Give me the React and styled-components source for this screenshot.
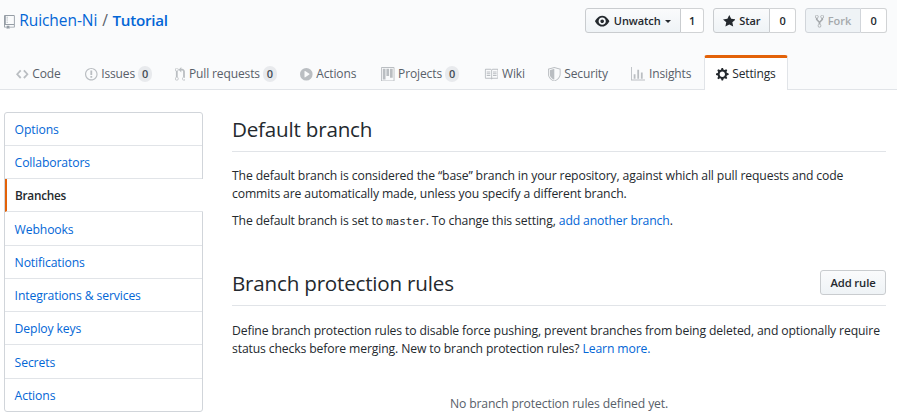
import React from 'react';
import styled, { createGlobalStyle, css } from 'styled-components';

const GlobalStyle = createGlobalStyle`
  * { box-sizing: border-box; }
  body {
    margin: 0;
    background: #fff;
    color: #24292e;
    font: 12.2px/18px "Open Sans", "Noto Sans", sans-serif;
    letter-spacing: -0.13px;
    overflow: hidden;
  }
`;

const ICONS = {
  repo: [12, 'M4 9H3V8h1v1zm0-3H3v1h1V6zm0-2H3v1h1V4zm0-2H3v1h1V2zm8-1v12c0 .55-.45 1-1 1H6v2l-1.5-1.5L3 16v-2H1c-.55 0-1-.45-1-1V1c0-.55.45-1 1-1h10c.55 0 1 .45 1 1zm-1 10H1v2h2v-1h3v1h5v-2zm0-10H2v9h9V1z'],
  eye: [16, 'M8.06 2C3 2 0 8 0 8s3 6 8.06 6C13 14 16 8 16 8s-3-6-7.94-6zM8 12c-2.2 0-4-1.78-4-4 0-2.2 1.8-4 4-4 2.22 0 4 1.8 4 4 0 2.22-1.78 4-4 4zm2-4c0 1.11-.89 2-2 2-1.11 0-2-.89-2-2 0-1.11.89-2 2-2 1.11 0 2 .89 2 2z'],
  star: [14, 'M14 6l-4.9-.64L7 1 4.9 5.36 0 6l3.6 3.26L2.67 14 7 11.67 11.33 14l-.93-4.74L14 6z'],
  fork: [10, 'M8 1a1.993 1.993 0 00-1 3.72V6L5 8 3 6V4.72A1.993 1.993 0 002 1a1.993 1.993 0 00-1 3.72V6.5l3 3v1.78A1.993 1.993 0 005 15a1.993 1.993 0 001-3.72V9.5l3-3V4.72A1.993 1.993 0 008 1zM2 4.2C1.34 4.2.8 3.65.8 3c0-.65.55-1.2 1.2-1.2.65 0 1.2.55 1.2 1.2 0 .65-.55 1.2-1.2 1.2zm3 10c-.66 0-1.2-.55-1.2-1.2 0-.65.55-1.2 1.2-1.2.65 0 1.2.55 1.2 1.2 0 .65-.55 1.2-1.2 1.2zm3-10c-.66 0-1.2-.55-1.2-1.2 0-.65.55-1.2 1.2-1.2.65 0 1.2.55 1.2 1.2 0 .65-.55 1.2-1.2 1.2z'],
  code: [14, 'M9.5 3L8 4.5 11.5 8 8 11.5 9.5 13 14 8 9.5 3zm-5 0L0 8l4.5 5L6 11.5 2.5 8 6 4.5 4.5 3z'],
  issue: [14, 'M7 2.3c3.14 0 5.7 2.56 5.7 5.7s-2.56 5.7-5.7 5.7A5.71 5.71 0 011.3 8c0-3.14 2.56-5.7 5.7-5.7zM7 1C3.14 1 0 4.14 0 8s3.14 7 7 7 7-3.14 7-7-3.14-7-7-7zm1 3H6v5h2V4zm0 6H6v2h2v-2z'],
  pull: [12, 'M11 11.28V5c-.03-.78-.34-1.47-.94-2.06C9.46 2.35 8.78 2.03 8 2H7V0L4 3l3 3V4h1c.27.02.48.11.69.31.21.2.3.42.31.69v6.28A1.993 1.993 0 0010 15a1.993 1.993 0 001-3.72zm-1 2.92c-.66 0-1.2-.55-1.2-1.2 0-.65.55-1.2 1.2-1.2.65 0 1.2.55 1.2 1.2 0 .65-.55 1.2-1.2 1.2zM4 3c0-1.11-.89-2-2-2a1.993 1.993 0 00-1 3.72v6.56A1.993 1.993 0 002 15a1.993 1.993 0 001-3.72V4.72c.59-.34 1-.98 1-1.72zm-.8 10c0 .66-.55 1.2-1.2 1.2-.65 0-1.2-.55-1.2-1.2 0-.65.55-1.2 1.2-1.2.65 0 1.2.55 1.2 1.2zM2 4.2C1.34 4.2.8 3.65.8 3c0-.65.55-1.2 1.2-1.2.65 0 1.2.55 1.2 1.2 0 .65-.55 1.2-1.2 1.2z'],
  play: [14, 'M14 8A7 7 0 110 8a7 7 0 0114 0zm-8.223 3.482l4.599-3.066a.5.5 0 000-.832L5.777 4.518A.5.5 0 005 4.934v6.132a.5.5 0 00.777.416z'],
  project: [15, 'M10 12h3V2h-3v10zm-4-2h3V2H6v8zm-4 4h3V2H2v12zm-1 1h13V1H1v14zM14 0H1a1 1 0 00-1 1v14a1 1 0 001 1h13a1 1 0 001-1V1a1 1 0 00-1-1z'],
  book: [16, 'M3 5h4v1H3V5zm0 3h4V7H3v1zm0 2h4V9H3v1zm11-5h-4v1h4V5zm0 2h-4v1h4V7zm0 2h-4v1h4V9zm2-6v9c0 .55-.45 1-1 1H9.5l-1 1-1-1H2c-.55 0-1-.45-1-1V3c0-.55.45-1 1-1h5.5l1 1 1-1H15c.55 0 1 .45 1 1zm-8 .5L7.5 3H2v9h6V3.5zm7-.5H9.5l-.5.5V12h6V3z'],
  shield: [14, 'M0 2l7-2 7 2v6.02C14 12.69 8.69 16 7 16c-1.69 0-7-3.31-7-7.98V2zm1 .75L7 1l6 1.75v5.268C13 12.104 8.449 15 7 15c-1.449 0-6-2.896-6-6.982V2.75zm1 .75L7 2v12c-1.207 0-5-2.482-5-5.985V3.5z'],
  graph: [16, 'M16 14v1H0V0h1v14h15zM5 13H3V8h2v5zm4 0H7V3h2v10zm4 0h-2V6h2v7z'],
  gear: [14, 'M14 8.77v-1.6l-1.94-.64-.45-1.09.88-1.84-1.13-1.13-1.81.91-1.09-.45-.69-1.92h-1.6l-.63 1.94-1.11.45-1.84-.88-1.13 1.13.91 1.81-.45 1.09L0 7.23v1.59l1.94.64.45 1.09-.88 1.84 1.13 1.13 1.81-.91 1.09.45.69 1.92h1.59l.63-1.94 1.11-.45 1.84.88 1.13-1.13-.92-1.81.47-1.09L14 8.75v.02zM7 11c-1.66 0-3-1.34-3-3s1.34-3 3-3 3 1.34 3 3-1.34 3-3 3z'],
};

const Svg = styled.svg`
  flex: none;
  display: block;
  fill: currentColor;
`;

function Icon({ name, className }) {
  const [w, d] = ICONS[name];
  return (
    <Svg className={className} width={w * 0.9} height={14.4} viewBox={`0 0 ${w} 16`} aria-hidden="true">
      <path fillRule="evenodd" d={d} />
    </Svg>
  );
}

const Link = styled.a`
  color: #0366d6;
  text-decoration: none;
`;

const Header = styled.header`
  height: 90px;
  background: #fafbfc;
  border-bottom: 1px solid #e1e4e8;
  display: flex;
  flex-direction: column;
  justify-content: space-between;
`;

const TitleBar = styled.div`
  display: flex;
  justify-content: space-between;
  padding: 8px 10px 0 4px;
`;

const RepoTitle = styled.h1`
  display: flex;
  align-items: center;
  margin: 0;
  height: 24px;
  font-size: 15.5px;
  font-weight: 400;
  letter-spacing: -0.06px;
  white-space: pre;
`;

const RepoIcon = styled(Icon)`
  color: #959da5;
  margin: 4px 4.4px 0 0;
`;

const Slash = styled.span`
  color: #586069;
  margin: 0 4.5px 0 5px;
`;

const RepoName = styled(Link)`
  font-weight: 600;
  font-size: 15.2px;
  letter-spacing: -0.25px;
`;

const SocialList = styled.div`
  display: flex;
  gap: 9px;
`;

const Social = styled.div`
  display: flex;
  height: 25px;
  font-size: 11px;
  font-weight: 600;
  letter-spacing: -0.08px;
`;

const Button = styled.button`
  display: flex;
  align-items: center;
  justify-content: center;
  height: 25px;
  width: ${(p) => p.$width}px;
  padding: 1px 0 0;
  gap: 4px;
  font: inherit;
  letter-spacing: inherit;
  color: #24292e;
  background: linear-gradient(#fafbfc, #eff3f6);
  border: 1px solid #c9cccf;
  border-radius: ${(p) => (p.$joined ? '3px 0 0 3px' : '3px')};
  ${(p) => p.$muted && css`
    color: #a5a9ac;
    background: #eff3f6;
    border-color: #d1d5da;
  `}
`;

const Count = styled.a`
  display: grid;
  place-items: center;
  width: ${(p) => p.$width}px;
  padding-top: 1px;
  background: #fff;
  border: 1px solid #d1d3d5;
  border-left: 0;
  border-radius: 0 3px 3px 0;
`;

const Caret = styled.span`
  border: 3.5px solid transparent;
  border-top-color: currentColor;
  border-bottom: 0;
`;

const Tabs = styled.nav`
  display: flex;
  align-items: flex-end;
  padding-left: 4px;
  margin-bottom: -1px;
`;

const Tab = styled.a`
  display: flex;
  align-items: center;
  height: 35px;
  width: ${(p) => p.$width}px;
  padding: 0 0 0 12px;
  gap: 3.6px;
  font-size: 12px;
  letter-spacing: -0.12px;
  white-space: nowrap;
  color: #586069;
  border-top: 3px solid transparent;

  ${Svg} {
    color: #babec2;
  }

  ${(p) => p.$selected && css`
    padding-left: 11px;
    color: #24292e;
    background: #fff;
    border: 1px solid #e1e4e8;
    border-top: 3px solid #e36209;
    border-bottom: 0;
    border-radius: 3px 3px 0 0;

    ${Svg} {
      color: #24292e;
    }
  `}
`;

const Badge = styled.span`
  display: grid;
  place-items: center;
  width: 14px;
  height: 16px;
  margin-left: -0.6px;
  border-radius: 8px;
  background: #e8eaed;
  color: #444d56;
  font-size: 11px;
  font-weight: 600;
  line-height: 16px;
`;

const Layout = styled.main`
  display: grid;
  grid-template-columns: 199px 654px;
  column-gap: 29px;
  align-items: start;
  padding: 22px 0 0 4px;
`;

const Menu = styled.nav`
  border: 1px solid #d1d5da;
  border-radius: 3px;
`;

const MenuItem = styled.a`
  display: flex;
  align-items: center;
  height: 33px;
  padding: 2px 0 0 9.6px;
  letter-spacing: -0.12px;
  color: #0366d6;
  border-bottom: 1px solid #e1e4e8;

  &:nth-child(4n) {
    height: 34px;
    padding-top: 3px;
  }

  &:last-child {
    height: 32px;
    border-bottom: 0;
  }

  ${(p) => p.$selected && css`
    margin-right: -1px;
    padding: 0 0 0 8px;
    font-size: 11.8px;
    font-weight: 600;
    letter-spacing: -0.25px;
    color: #24292e;
    background: #fff;
    border-left: 2px solid #e36209;
  `}
`;

const SectionHead = styled.div`
  display: flex;
  justify-content: space-between;
  align-items: flex-end;
  height: 40px;
  margin-bottom: ${(p) => p.$gap}px;
  padding-bottom: 10px;
  border-bottom: 1px solid #e1e4e8;
  font-size: 11.3px;
  font-weight: 600;
`;

const Heading = styled.h2`
  margin: 0 0 -3px;
  font-size: 20.6px;
  font-weight: 400;
  line-height: 30px;
  letter-spacing: -0.2px;
`;

const Section = styled.section`
  & + & {
    margin-top: 36px;
  }
`;

const Text = styled.p`
  margin: 0 0 9px;
  white-space: nowrap;
`;

const Code = styled.code`
  font: 11px/16px "DejaVu Sans Mono", monospace;
  letter-spacing: 0;
`;

const Empty = styled.p`
  margin: 37px 0 0;
  text-align: center;
  color: #586069;
`;

const TABS = [
  { icon: 'code', label: 'Code', width: 69 },
  { icon: 'issue', label: 'Issues', width: 89.5, count: 0 },
  { icon: 'pull', label: 'Pull requests', width: 125.5, count: 0 },
  { icon: 'play', label: 'Actions', width: 81 },
  { icon: 'project', label: 'Projects', width: 103, count: 0 },
  { icon: 'book', label: 'Wiki', width: 64 },
  { icon: 'shield', label: 'Security', width: 83 },
  { icon: 'graph', label: 'Insights', width: 85 },
  { icon: 'gear', label: 'Settings', width: 84, selected: true },
];

const MENU = ['Options', 'Collaborators', 'Branches', 'Webhooks', 'Notifications', 'Integrations & services', 'Deploy keys', 'Secrets', 'Actions'];

export default function App() {
  return (
    <>
      <GlobalStyle />
      <Header>
        <TitleBar>
          <RepoTitle>
            <RepoIcon name="repo" />
            <Link>Ruichen-Ni</Link>
            <Slash>/</Slash>
            <RepoName>Tutorial</RepoName>
          </RepoTitle>
          <SocialList>
            <Social>
              <Button $joined $width={96}><Icon name="eye" />Unwatch<Caret /></Button>
              <Count $width={23}>1</Count>
            </Social>
            <Social>
              <Button $joined $width={57}><Icon name="star" />Star</Button>
              <Count $width={26}>0</Count>
            </Social>
            <Social>
              <Button $joined $muted $width={56}><Icon name="fork" />Fork</Button>
              <Count $width={26}>0</Count>
            </Social>
          </SocialList>
        </TitleBar>
        <Tabs>
          {TABS.map((t) => (
            <Tab key={t.label} $width={t.width} $selected={t.selected}>
              <Icon name={t.icon} />
              {t.label}
              {t.count !== undefined && <Badge>{t.count}</Badge>}
            </Tab>
          ))}
        </Tabs>
      </Header>
      <Layout>
        <Menu>
          {MENU.map((m) => (
            <MenuItem key={m} $selected={m === 'Branches'}>{m}</MenuItem>
          ))}
        </Menu>
        <div>
          <Section>
            <SectionHead $gap={15}><Heading>Default branch</Heading></SectionHead>
            <Text>
              The default branch is considered the “base” branch in your repository, against which all pull requests and code
              <br />
              commits are automatically made, unless you specify a different branch.
            </Text>
            <Text>
              The default branch is set to <Code>master</Code>. To change this setting, <Link>add another branch</Link>.
            </Text>
          </Section>
          <Section>
            <SectionHead $gap={16}>
              <Heading>Branch protection rules</Heading>
              <Button $width={66}>Add rule</Button>
            </SectionHead>
            <Text>
              Define branch protection rules to disable force pushing, prevent branches from being deleted, and optionally require
              <br />
              status checks before merging. New to branch protection rules? <Link>Learn more.</Link>
            </Text>
            <Empty>No branch protection rules defined yet.</Empty>
          </Section>
        </div>
      </Layout>
    </>
  );
}
